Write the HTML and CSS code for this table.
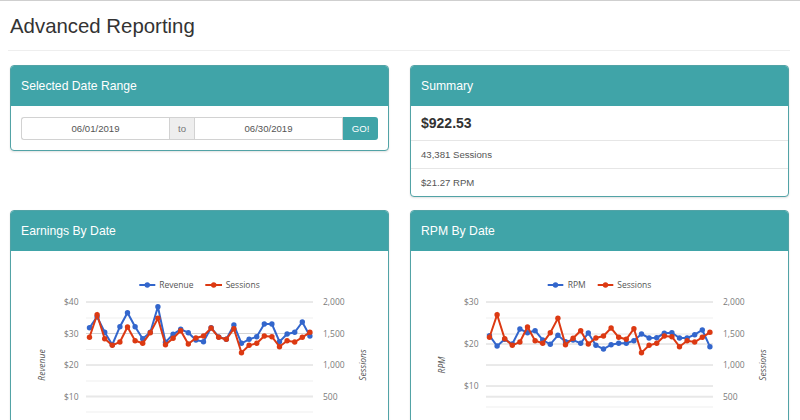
FILE: index.html
```html
<!DOCTYPE html>
<html lang="en">
<head>
<meta charset="utf-8">
<title>Advanced Reporting</title>
<link rel="stylesheet" href="styles.css">
</head>
<body>
<div class="page">
  <h1 class="title">Advanced Reporting</h1>
  <hr class="rule">
  <div class="grid">
    <section class="panel">
      <div class="panel-heading">Selected Date Range</div>
      <div class="panel-body">
        <div class="input-group">
          <input class="date-input first" type="text" value="06/01/2019">
          <span class="addon">to</span>
          <input class="date-input" type="text" value="06/30/2019">
          <button class="go-btn" type="button">GO!</button>
        </div>
      </div>
    </section>

    <section class="panel">
      <div class="panel-heading">Summary</div>
      <ul class="summary">
        <li class="summary-total">$922.53</li>
        <li class="summary-row">43,381 Sessions</li>
        <li class="summary-row">$21.27 RPM</li>
      </ul>
    </section>

    <section class="panel chart-panel">
      <div class="panel-heading">Earnings By Date</div>
      <div class="chart-body">
        <svg class="chart" width="377" height="200" viewBox="11 251 377 200">
          <defs>
            <marker id="dotB1" markerWidth="7" markerHeight="7" refX="3.5" refY="3.5" markerUnits="userSpaceOnUse"><circle cx="3.5" cy="3.5" r="2.7" fill="#3366cc"/></marker>
            <marker id="dotR1" markerWidth="7" markerHeight="7" refX="3.5" refY="3.5" markerUnits="userSpaceOnUse"><circle cx="3.5" cy="3.5" r="2.7" fill="#dc3912"/></marker>
          </defs>
          <g class="grid-lines">
            <line class="minor" x1="86" x2="313" y1="318" y2="318"/>
            <line class="minor" x1="86" x2="313" y1="349.5" y2="349.5"/>
            <line class="minor" x1="86" x2="313" y1="381" y2="381"/>
            <line class="minor" x1="86" x2="313" y1="412" y2="412"/>
            <line class="thick" x1="86" x2="313" y1="396.5" y2="396.5"/>
            <line class="major" x1="86" x2="313" y1="302" y2="302"/>
            <line class="major" x1="86" x2="313" y1="333.5" y2="333.5"/>
            <line class="major" x1="86" x2="313" y1="365" y2="365"/>
          </g>
          <g class="axis-labels left">
            <text x="78.5" y="305">$40</text>
            <text x="78.5" y="336.8">$30</text>
            <text x="78.5" y="368.3">$20</text>
            <text x="78.5" y="399.7">$10</text>
          </g>
          <g class="axis-labels right">
            <text x="323" y="305">2,000</text>
            <text x="323" y="336.8">1,500</text>
            <text x="323" y="368.3">1,000</text>
            <text x="323" y="399.7">500</text>
          </g>
          <text class="axis-title" transform="translate(45,365) rotate(-90)">Revenue</text>
          <text class="axis-title" transform="translate(366,365) rotate(-90)">Sessions</text>
          <g class="legend">
            <line class="blue-line" x1="139.3" x2="155.3" y1="285" y2="285"/>
            <circle cx="147.3" cy="285" r="2.7" fill="#3366cc"/>
            <text x="159.3" y="288">Revenue</text>
            <line class="red-line" x1="205.3" x2="222" y1="285" y2="285"/>
            <circle cx="213.7" cy="285" r="2.7" fill="#dc3912"/>
            <text x="225.7" y="288">Sessions</text>
          </g>
          <polyline class="blue-line" marker-start="url(#dotB1)" marker-mid="url(#dotB1)" marker-end="url(#dotB1)" points="89.5,327.7 97.1,316.7 104.7,332.3 112.3,344.7 119.9,326.7 127.5,312.7 135.1,326.7 142.7,338.7 150.3,332.3 157.9,306.7 165.5,342.3 173.1,334.3 180.7,329.3 188.3,332.7 195.9,340 203.5,341.7 211.1,327.7 218.7,337 226.3,339.3 233.9,325 241.5,343.3 249.1,339.3 256.7,336.7 264.3,324 271.9,324 279.5,341.7 287.1,334 294.7,332.3 302.3,322 309.9,336"/>
          <polyline class="red-line" marker-start="url(#dotR1)" marker-mid="url(#dotR1)" marker-end="url(#dotR1)" points="89.5,337.3 97.1,314.7 104.7,338.7 112.3,345.3 119.9,342 127.5,327 135.1,340.7 142.7,343.3 150.3,332.7 157.9,318.3 165.5,344.7 173.1,338.3 180.7,330.7 188.3,344 195.9,338 203.5,336 211.1,328 218.7,337.3 226.3,339.3 233.9,328.7 241.5,352.7 249.1,345.3 256.7,343.3 264.3,336 271.9,336.7 279.5,346.7 287.1,340.7 294.7,342 302.3,337.3 309.9,332.3"/>
        </svg>
      </div>
    </section>

    <section class="panel chart-panel">
      <div class="panel-heading">RPM By Date</div>
      <div class="chart-body">
        <svg class="chart" width="377" height="200" viewBox="11 251 377 200">
          <defs>
            <marker id="dotB2" markerWidth="7" markerHeight="7" refX="3.5" refY="3.5" markerUnits="userSpaceOnUse"><circle cx="3.5" cy="3.5" r="2.7" fill="#3366cc"/></marker>
            <marker id="dotR2" markerWidth="7" markerHeight="7" refX="3.5" refY="3.5" markerUnits="userSpaceOnUse"><circle cx="3.5" cy="3.5" r="2.7" fill="#dc3912"/></marker>
          </defs>
          <g class="grid-lines">
            <line class="minor" x1="86" x2="313" y1="318" y2="318"/>
            <line class="mid" x1="86" x2="313" y1="334" y2="334"/>
            <line class="minor" x1="86" x2="313" y1="407" y2="407"/>
            <line class="thick" x1="86" x2="313" y1="396.7" y2="396.7"/>
            <line class="major" x1="86" x2="313" y1="302" y2="302"/>
            <line class="major" x1="86" x2="313" y1="344" y2="344"/>
            <line class="major" x1="86" x2="313" y1="365" y2="365"/>
            <line class="major" x1="86" x2="313" y1="386" y2="386"/>
          </g>
          <g class="axis-labels left">
            <text x="78.5" y="305">$30</text>
            <text x="78.5" y="347">$20</text>
            <text x="78.5" y="389">$10</text>
          </g>
          <g class="axis-labels right">
            <text x="323" y="305">2,000</text>
            <text x="323" y="336.8">1,500</text>
            <text x="323" y="368.3">1,000</text>
            <text x="323" y="399.7">500</text>
          </g>
          <text class="axis-title" transform="translate(45,365) rotate(-90)">RPM</text>
          <text class="axis-title" transform="translate(366,365) rotate(-90)">Sessions</text>
          <g class="legend">
            <line class="blue-line" x1="147.7" x2="163.3" y1="285" y2="285"/>
            <circle cx="155.5" cy="285" r="2.7" fill="#3366cc"/>
            <text x="167.7" y="288">RPM</text>
            <line class="red-line" x1="197.7" x2="213.3" y1="285" y2="285"/>
            <circle cx="205.5" cy="285" r="2.7" fill="#dc3912"/>
            <text x="217.3" y="288">Sessions</text>
          </g>
          <polyline class="blue-line" marker-start="url(#dotB2)" marker-mid="url(#dotB2)" marker-end="url(#dotB2)" points="89.5,335.7 97.1,346 104.7,339.3 112.3,344 119.9,329 127.5,332.7 135.1,330.7 142.7,340 150.3,344.3 157.9,335.3 165.5,341.7 173.1,340 180.7,343.3 188.3,333 195.9,345.3 203.5,349 211.1,344.7 218.7,343.3 226.3,343.3 233.9,340.7 241.5,334 249.1,338 256.7,337.7 264.3,333.3 271.9,332.7 279.5,338 287.1,338 294.7,334.7 302.3,330 309.9,346.7"/>
          <polyline class="red-line" marker-start="url(#dotR2)" marker-mid="url(#dotR2)" marker-end="url(#dotR2)" points="89.5,337.3 97.1,314.7 104.7,338.7 112.3,345.3 119.9,342 127.5,327 135.1,340.7 142.7,343.3 150.3,332.7 157.9,318.3 165.5,344.7 173.1,338.3 180.7,330.7 188.3,344 195.9,338 203.5,336 211.1,328 218.7,337.3 226.3,339.3 233.9,328.7 241.5,352.7 249.1,345.3 256.7,343.3 264.3,336 271.9,336.7 279.5,346.7 287.1,340.7 294.7,342 302.3,337.3 309.9,332.3"/>
        </svg>
      </div>
    </section>
  </div>
</div>
</body>
</html>
```

FILE: styles.css
```css
* { box-sizing: border-box; }

html, body {
  margin: 0;
  padding: 0;
  background: #fff;
  overflow: hidden;
}

body {
  border-top: 1px solid #cfcfcf;
  font-family: "Liberation Sans", Arial, sans-serif;
  color: #333;
}

.page {
  padding: 0 10px;
}

.title {
  margin: 13px 0 0;
  font-size: 20.4px;
  line-height: 24px;
  font-weight: normal;
  color: #333;
}

.rule {
  margin: 12px 0 0 -2px;
  border: 0;
  border-top: 1px solid #eeeeee;
  height: 0;
}

.grid {
  margin-top: 14px;
  display: grid;
  grid-template-columns: 379px 379px;
  column-gap: 21px;
  row-gap: 13px;
  align-items: start;
}

.panel {
  border: 1px solid #52a3a6;
  border-radius: 4px;
  background: #fff;
  box-shadow: 0 1px 2px rgba(0, 0, 0, 0.12);
  overflow: hidden;
}

.panel-heading {
  height: 40px;
  display: flex;
  align-items: center;
  padding: 0 10px;
  background: #40a4a8;
  color: #fff;
  font-size: 12.2px;
}

.panel-body {
  padding: 11px 10px 10px;
}

.input-group {
  display: flex;
  height: 23px;
}

.date-input {
  flex: 1;
  min-width: 0;
  height: 23px;
  margin: 0;
  border: 1px solid #d2d2d2;
  padding: 0 6px;
  font-family: "Liberation Sans", Arial, sans-serif;
  font-size: 9.6px;
  color: #555;
  text-align: center;
  background: #fff;
}

.date-input.first {
  border-radius: 3px 0 0 3px;
  border-right: 0;
}

.addon {
  width: 26px;
  flex: none;
  display: flex;
  align-items: center;
  justify-content: center;
  background: #eeeeee;
  border: 1px solid #d2d2d2;
  border-left-color: #d2d2d2;
  font-size: 9.6px;
  color: #777;
}

.addon + .date-input {
  border-left: 0;
}

.go-btn {
  width: 35px;
  flex: none;
  height: 23px;
  margin: 0;
  border: 0;
  border-radius: 0 3px 3px 0;
  background: #40a4a8;
  color: #fff;
  font-family: "Liberation Sans", Arial, sans-serif;
  font-size: 9.6px;
  padding: 0;
}

.summary {
  list-style: none;
  margin: 0;
  padding: 0;
}

.summary-total {
  height: 34px;
  display: flex;
  align-items: center;
  padding: 0 10px;
  font-size: 14px;
  font-weight: bold;
  color: #333;
}

.summary-row {
  height: 28px;
  display: flex;
  align-items: center;
  padding: 0 10px;
  border-top: 1px solid #e6e6e6;
  font-size: 9.6px;
  color: #555;
}

.chart-body {
  height: 200px;
}

.chart {
  display: block;
}

.grid-lines line { stroke-width: 1; }
.grid-lines .major { stroke: #d4d4d4; }
.grid-lines .mid { stroke: #e2e2e2; }
.grid-lines .minor { stroke: #efefef; }
.grid-lines .thick { stroke: #e8e8e8; stroke-width: 2; }

.axis-labels text {
  font-family: "Open Sans", "DejaVu Sans", sans-serif;
  font-size: 8.5px;
  fill: #7a7a7a;
}

.axis-labels.left text { text-anchor: end; }
.axis-labels.right text { text-anchor: start; }

.axis-title {
  font-family: "Open Sans", "DejaVu Sans", sans-serif;
  font-size: 8.5px;
  font-style: italic;
  fill: #555;
  text-anchor: middle;
}

.legend text {
  font-family: "Open Sans", "DejaVu Sans", sans-serif;
  font-size: 8.5px;
  fill: #555;
}

.blue-line {
  fill: none;
  stroke: #3366cc;
  stroke-width: 2;
}

.red-line {
  fill: none;
  stroke: #dc3912;
  stroke-width: 2;
}
```
